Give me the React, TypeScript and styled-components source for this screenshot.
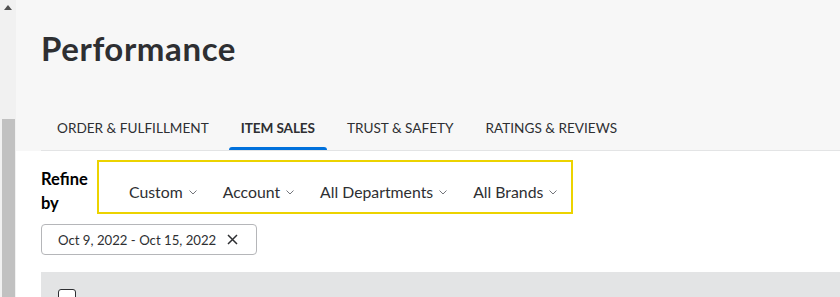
import React from "react";
import styled, { createGlobalStyle } from "styled-components";

const Global = createGlobalStyle`
  html, body { margin: 0; padding: 0; background: #ffffff; }
  body { font-family: Lato, "Open Sans", "Liberation Sans", sans-serif; color: #2e2f32; overflow: hidden; }
  * { box-sizing: border-box; }
`;

const Page = styled.div`
  display: flex;
  width: 840px;
  height: 297px;
  overflow: hidden;
`;

const Scrollbar = styled.div`
  width: 16px;
  flex: none;
  height: 297px;
  background: #f1f1f1;
  display: flex;
  flex-direction: column;
  align-items: center;
`;

const ScrollArrow = styled.div`
  height: 17px;
  width: 16px;
  display: flex;
  align-items: center;
  justify-content: center;
  padding-bottom: 2px;
`;

const ScrollThumb = styled.div`
  margin-top: 102px;
  width: 13px;
  margin-left: 1px;
  flex: 1;
  background: #c1c1c1;
`;

const Content = styled.div`
  flex: 1;
  display: flex;
  flex-direction: column;
  min-width: 0;
`;

const Header = styled.div`
  background: #f7f7f7;
  padding-left: 25px;
  display: flex;
  flex-direction: column;
`;

const Title = styled.h1`
  margin: 28px 0 0;
  font-size: 33px;
  line-height: 40px;
  font-weight: 700;
  color: #2e2f32;
  letter-spacing: 0.6px;
`;

const TabBar = styled.div`
  margin-top: 34px;
  height: 49px;
  display: flex;
  border-bottom: 1px solid #e3e4e5;
`;

const Tab = styled.div<{ $active?: boolean }>`
  position: relative;
  padding: 3px 16px 0;
  height: 100%;
  display: flex;
  align-items: center;
  font-size: 13.6px;
  font-weight: ${(p) => (p.$active ? 700 : 400)};
  letter-spacing: ${(p) => (p.$active ? "-0.1px" : "0")};
  color: #2e2f32;
  white-space: nowrap;
  &::after {
    content: "";
    display: ${(p) => (p.$active ? "block" : "none")};
    position: absolute;
    left: 4px;
    right: 4px;
    bottom: 0;
    height: 3px;
    border-radius: 3px 3px 0 0;
    background: #0071dc;
  }
`;

const Body = styled.div`
  padding: 9px 0 0 25px;
  display: flex;
  flex-direction: column;
  background: #ffffff;
`;

const RefineRow = styled.div`
  display: flex;
  align-items: flex-start;
`;

const RefineLabel = styled.div`
  width: 56px;
  margin-top: 7px;
  font-size: 16.5px;
  line-height: 24px;
  font-weight: 700;
  color: #000000;
`;

const FilterBox = styled.div`
  display: flex;
  align-items: center;
  gap: 26px;
  height: 54px;
  padding: 10px 14px 0 30px;
  border: 2px solid #ecd300;
`;

const Filter = styled.div`
  display: flex;
  align-items: center;
  gap: 6px;
  font-size: 15.8px;
  line-height: 24px;
  color: #2e2f32;
  white-space: nowrap;
`;

const Chip = styled.div`
  margin-top: 9px;
  align-self: flex-start;
  width: 216px;
  height: 31px;
  display: flex;
  align-items: center;
  gap: 11px;
  padding: 0 0 0 16px;
  border: 1px solid #b5b6b9;
  border-radius: 4px;
  font-size: 13.2px;
  color: #2e2f32;
  white-space: nowrap;
`;

const TableHead = styled.div`
  margin-top: 17px;
  height: 60px;
  background: #e3e4e5;
  display: flex;
  align-items: flex-start;
  padding: 17px 0 0 17px;
`;

const Checkbox = styled.div`
  width: 18px;
  height: 18px;
  border: 1.5px solid #2e2f32;
  border-radius: 3px;
  background: #ffffff;
  flex: none;
`;

const HeadCell = styled.div<{ $w: number; $ml?: number }>`
  width: ${(p) => p.$w}px;
  margin-left: ${(p) => p.$ml ?? 0}px;
  flex: none;
  margin-top: 9px;
  font-size: 14px;
  font-weight: 700;
  color: #000;
  white-space: nowrap;
  display: flex;
  align-items: center;
  gap: 4px;
`;

const Chevron = () => (
  <svg width="8" height="5" viewBox="0 0 8 5" fill="none">
    <path d="M0.5 0.5L4 4L7.5 0.5" stroke="#74767c" strokeWidth="1" />
  </svg>
);

const CloseIcon = () => (
  <svg width="11" height="11" viewBox="0 0 11 11" fill="none">
    <path d="M1 1L10 10M10 1L1 10" stroke="#2e2f32" strokeWidth="1.5" />
  </svg>
);

const InfoIcon = () => (
  <svg width="14" height="14" viewBox="0 0 14 14" fill="none">
    <circle cx="7" cy="7" r="6" stroke="#2e2f32" strokeWidth="1.2" />
    <path d="M7 6V10.5" stroke="#2e2f32" strokeWidth="1.3" />
    <circle cx="7" cy="4" r="0.8" fill="#2e2f32" />
  </svg>
);

const tabs = ["ORDER & FULFILLMENT", "ITEM SALES", "TRUST & SAFETY", "RATINGS & REVIEWS"];
const filters = ["Custom", "Account", "All Departments", "All Brands"];

export default function App() {
  return (
    <>
      <Global />
      <Page>
        <Scrollbar>
          <ScrollArrow>
            <svg width="8" height="5" viewBox="0 0 8 5">
              <path d="M0 5L4 0L8 5Z" fill="#505050" />
            </svg>
          </ScrollArrow>
          <ScrollThumb />
        </Scrollbar>
        <Content>
          <Header>
            <Title>Performance</Title>
            <TabBar>
              {tabs.map((t) => (
                <Tab key={t} $active={t === "ITEM SALES"}>
                  {t}
                </Tab>
              ))}
            </TabBar>
          </Header>
          <Body>
            <RefineRow>
              <RefineLabel>
                Refine
                <br />
                by
              </RefineLabel>
              <FilterBox>
                {filters.map((f) => (
                  <Filter key={f}>
                    {f}
                    <Chevron />
                  </Filter>
                ))}
              </FilterBox>
            </RefineRow>
            <Chip>
              Oct 9, 2022 - Oct 15, 2022
              <CloseIcon />
            </Chip>
            <TableHead>
              <Checkbox />
              <HeadCell $w={437} $ml={32}>Item Name</HeadCell>
              <HeadCell $w={201}>SKU</HeadCell>
              <HeadCell $w={110}>
                GMV <InfoIcon />
              </HeadCell>
              <HeadCell $w={60}>Units</HeadCell>
            </TableHead>
          </Body>
        </Content>
      </Page>
    </>
  );
}
